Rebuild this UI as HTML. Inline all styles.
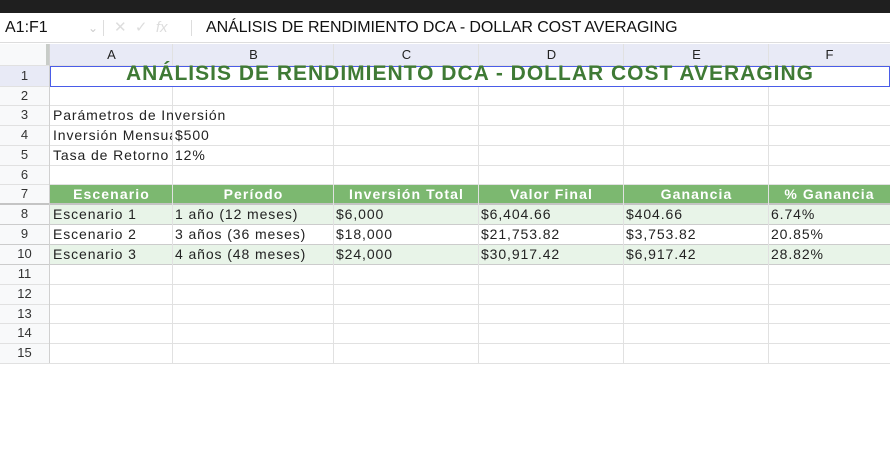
<!DOCTYPE html>
<html><head><meta charset="utf-8"><style>
body{margin:0;width:890px;height:462px;overflow:hidden;background:#fff;font-family:"Liberation Sans",Arial,sans-serif;position:relative}
div{position:absolute;box-sizing:border-box}
.h{left:0;width:890px;height:1px;background:#e1e1e1}
.v{top:44px;width:1px;height:319px;background:#e1e1e1}
.t{font-size:14px;color:#222;white-space:nowrap;line-height:20px;overflow:hidden;letter-spacing:0.9px}
.rn{left:0;width:49px;text-align:center;font-size:13px;color:#333;line-height:20px}
.ch{top:44px;height:21px;text-align:center;font-size:13px;color:#222;line-height:22px}
.gh{color:#fff;font-weight:bold;font-size:14px;text-align:center;line-height:19px;letter-spacing:1.1px}
</style></head><body>
<div style="left:0;top:0;width:890px;height:13px;background:#1f1f1f"></div>
<div style="left:0;top:13px;width:890px;height:30px;background:#fff;border-bottom:1px solid #ddd"></div>
<div style="left:5px;top:17px;font-size:16px;color:#111;line-height:22px">A1:F1</div>
<div style="left:88px;top:17px;font-size:12px;color:#ccc;line-height:22px">⌄</div>
<div style="left:103px;top:20px;width:1px;height:16px;background:#ddd"></div>
<div style="left:114px;top:17px;font-size:15px;color:#ddd;line-height:22px">✕ &nbsp;✓ &nbsp;<i>fx</i></div>
<div style="left:191px;top:20px;width:1px;height:16px;background:#ddd"></div>
<div style="left:206px;top:17px;font-size:16px;color:#111;line-height:22px;letter-spacing:-0.1px">ANÁLISIS DE RENDIMIENTO DCA - DOLLAR COST AVERAGING</div>
<div style="left:0;top:44px;width:890px;height:21px;background:#e8eaf6"></div>
<div style="left:0;top:44px;width:49px;height:21px;background:#f8f9fa"></div>
<div style="left:46px;top:44px;width:3px;height:21px;background:#c8ccc8"></div>
<div style="left:0;top:65px;width:50px;height:298px;background:#f8f9fa"></div>
<div style="left:0;top:66px;width:50px;height:20px;background:#e8eaf6"></div>
<div class="ch" style="left:50px;width:123px">A</div>
<div class="ch" style="left:173px;width:161px">B</div>
<div class="ch" style="left:334px;width:145px">C</div>
<div class="ch" style="left:479px;width:145px">D</div>
<div class="ch" style="left:624px;width:145px">E</div>
<div class="ch" style="left:769px;width:121px">F</div>
<div style="left:50px;top:185px;width:840px;height:19px;background:#7cb870"></div>
<div style="left:50px;top:205px;width:840px;height:19px;background:#e8f4e8"></div>
<div style="left:50px;top:245px;width:840px;height:19px;background:#e8f4e8"></div>
<div class="h" style="top:65px"></div>
<div class="h" style="top:86px"></div>
<div class="h" style="top:105px"></div>
<div class="h" style="top:125px"></div>
<div class="h" style="top:145px"></div>
<div class="h" style="top:165px"></div>
<div class="h" style="top:184px"></div>
<div class="h" style="top:203px;height:2px;background:#c4c4c4"></div>
<div class="h" style="top:224px;background:#ccc"></div>
<div class="h" style="top:244px;background:#ccc"></div>
<div class="h" style="top:264px;background:#ccc"></div>
<div class="h" style="top:284px"></div>
<div class="h" style="top:304px"></div>
<div class="h" style="top:323px"></div>
<div class="h" style="top:343px"></div>
<div class="h" style="top:363px"></div>
<div class="v" style="left:49px;background:#d0d0d0"></div>
<div class="v" style="left:172px"></div>
<div class="v" style="left:333px"></div>
<div class="v" style="left:478px"></div>
<div class="v" style="left:623px"></div>
<div class="v" style="left:768px"></div>
<div style="left:50px;top:66px;width:840px;height:20px;background:#fff"></div>
<div style="left:50px;top:66px;width:840px;height:21px;border:1.5px solid #4a5ce8"></div>
<div style="left:50px;top:62px;width:840px;text-align:center;font-weight:bold;font-size:21px;color:#3f7a35;line-height:24px;letter-spacing:1px">ANÁLISIS DE RENDIMIENTO DCA - DOLLAR COST AVERAGING</div>
<div class="rn" style="top:66px">1</div>
<div class="rn" style="top:86px">2</div>
<div class="rn" style="top:105px">3</div>
<div class="rn" style="top:125px">4</div>
<div class="rn" style="top:145px">5</div>
<div class="rn" style="top:165px">6</div>
<div class="rn" style="top:184px">7</div>
<div class="rn" style="top:204px">8</div>
<div class="rn" style="top:224px">9</div>
<div class="rn" style="top:244px">10</div>
<div class="rn" style="top:264px">11</div>
<div class="rn" style="top:284px">12</div>
<div class="rn" style="top:304px">13</div>
<div class="rn" style="top:323px">14</div>
<div class="rn" style="top:343px">15</div>
<div class="t" style="left:53px;top:105px">Parámetros de Inversión</div>
<div class="t" style="left:53px;top:125px;width:119px">Inversión Mensual</div>
<div class="t" style="left:175px;top:125px">$500</div>
<div class="t" style="left:53px;top:145px">Tasa de Retorno</div>
<div class="t" style="left:175px;top:145px">12%</div>
<div class="gh" style="left:50px;top:185px;width:123px">Escenario</div>
<div class="gh" style="left:173px;top:185px;width:161px">Período</div>
<div class="gh" style="left:334px;top:185px;width:145px">Inversión Total</div>
<div class="gh" style="left:479px;top:185px;width:145px">Valor Final</div>
<div class="gh" style="left:624px;top:185px;width:145px">Ganancia</div>
<div class="gh" style="left:769px;top:185px;width:121px">% Ganancia</div>
<div class="t" style="left:53px;top:204px">Escenario 1</div>
<div class="t" style="left:175px;top:204px">1 año (12 meses)</div>
<div class="t" style="left:336px;top:204px">$6,000</div>
<div class="t" style="left:481px;top:204px">$6,404.66</div>
<div class="t" style="left:626px;top:204px">$404.66</div>
<div class="t" style="left:771px;top:204px">6.74%</div>
<div class="t" style="left:53px;top:224px">Escenario 2</div>
<div class="t" style="left:175px;top:224px">3 años (36 meses)</div>
<div class="t" style="left:336px;top:224px">$18,000</div>
<div class="t" style="left:481px;top:224px">$21,753.82</div>
<div class="t" style="left:626px;top:224px">$3,753.82</div>
<div class="t" style="left:771px;top:224px">20.85%</div>
<div class="t" style="left:53px;top:244px">Escenario 3</div>
<div class="t" style="left:175px;top:244px">4 años (48 meses)</div>
<div class="t" style="left:336px;top:244px">$24,000</div>
<div class="t" style="left:481px;top:244px">$30,917.42</div>
<div class="t" style="left:626px;top:244px">$6,917.42</div>
<div class="t" style="left:771px;top:244px">28.82%</div>
</body></html>
